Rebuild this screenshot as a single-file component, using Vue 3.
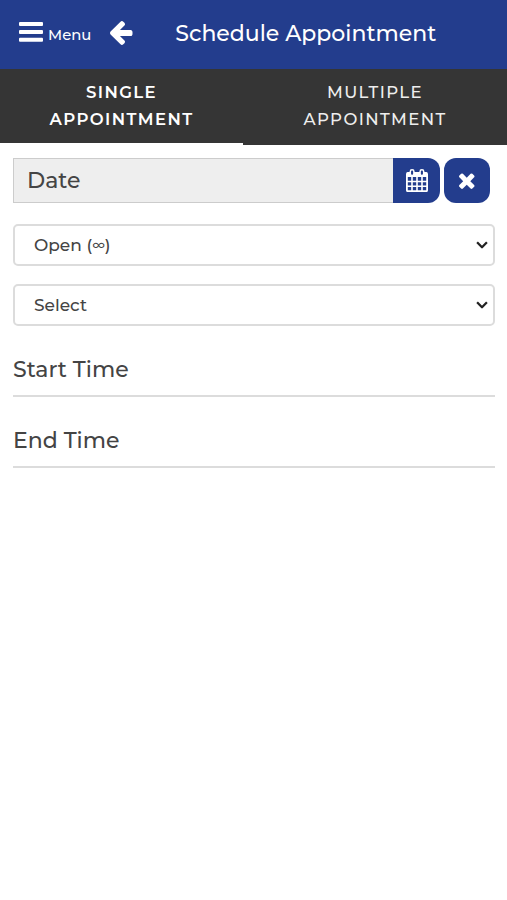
<script setup>
const selects = [
  { before: 'Open (', symbol: '∞', after: ')' },
  { before: 'Select', symbol: '', after: '' },
]
const times = [
  { label: 'Start Time', cls: 'start' },
  { label: 'End Time', cls: 'end' },
]
</script>

<template>
  <div class="page">
    <header class="bar">
      <button class="menu">
        <svg class="bars" viewBox="0 0 24 20">
          <rect x="0" y="0" width="24" height="4" rx="1" />
          <rect x="0" y="7.900" width="24" height="4" rx="1" />
          <rect x="0" y="15.800" width="24" height="4" rx="1" />
        </svg>
        <span class="menu-label">Menu</span>
      </button>
      <svg class="back" viewBox="192 179 1472 1560">
        <path d="M1664 896v128q0 53-32.5 90.500t-84.500 37.500h-704l293 294q38 36 38 90t-38 90l-75 76q-37 37-90 37-52 0-91-37l-651-652q-37-37-37-90 0-52 37-91l651-650q38-38 91-38 52 0 90 38l75 74q38 38 38 91t-38 91l-293 293h704q52 0 84.500 37.500t32.500 90.500z" />
      </svg>
      <h1 class="title">Schedule Appointment</h1>
    </header>
    <nav class="tabs">
      <a class="tab active"><span>SINGLE</span><span>APPOINTMENT</span></a>
      <a class="tab"><span>MULTIPLE</span><span>APPOINTMENT</span></a>
    </nav>
    <main class="form">
      <div class="date-row">
        <div class="date-field"><span>Date</span></div>
        <button class="btn pick">
          <svg class="calendar" viewBox="0 0 22 23">
            <rect x="0.900" y="4" width="20.200" height="18.200" rx="1" fill="none" stroke="#fff" stroke-width="1.800" />
            <path d="M1 3.500H21V8H1Z" fill="#fff" />
            <rect x="4.300" y="0.800" width="3.600" height="5.600" rx="1.700" fill="#233d8d" stroke="#fff" stroke-width="1.500" />
            <rect x="14.100" y="0.800" width="3.600" height="5.600" rx="1.700" fill="#233d8d" stroke="#fff" stroke-width="1.500" />
            <path d="M6 8V22M11 8V22M16 8V22M1 12.500H21M1 17.200H21" stroke="#fff" stroke-width="1.600" />
          </svg>
        </button>
        <button class="btn clear">
          <svg class="times" viewBox="302 334 1188 1220">
            <path d="M1490 1322q0 40-28 68l-136 136q-28 28-68 28t-68-28l-294-294-294 294q-28 28-68 28t-68-28l-136-136q-28-28-28-68t28-68l294-294-294-294q-28-28-28-68t28-68l136-136q28-28 68-28t68 28l294 294 294-294q28-28 68-28t68 28l136 136q28 28 28 68t-28 68l-294 294 294 294q28 28 28 68z" />
          </svg>
        </button>
      </div>
      <div v-for="s in selects" :key="s.before" class="select">
        <span>{{ s.before }}<span class="symbol">{{ s.symbol }}</span>{{ s.after }}</span>
        <svg class="chev" viewBox="0 0 12 8"><path d="M1.100 1.300L6 6.200L10.900 1.300" /></svg>
      </div>
      <div v-for="t in times" :key="t.label" class="time" :class="t.cls"><span>{{ t.label }}</span></div>
    </main>
  </div>
</template>

<style>
body { background: #fff; }
</style>

<style scoped>
.page {
  width: 507px;
  height: 900px;
  overflow: hidden;
  background: #fff;
  color: #444;
  font-family: Montserrat, Inter, "Liberation Sans", sans-serif;
  font-weight: 500;
}
.bar {
  display: flex;
  height: 69px;
  box-sizing: border-box;
  padding-left: 18.500px;
  background: #233d8d;
  color: #fff;
}
button {
  border: 0;
  padding: 0;
  font-family: inherit;
  color: #fff;
}
.menu { display: flex; width: 91.500px; background: none; align-items: flex-start; }
.bars { width: 24px; height: 20px; margin-top: 22px; fill: #fff; }
.menu-label {
  margin: 25px 0 0 5.500px;
  font-size: 14.800px;
  font-weight: 500;
  line-height: 20px;
}
.back { width: 22.500px; height: 24px; margin-top: 21px; fill: #fff; }
.title {
  margin: 19px 0 0 42.800px;
  font-size: 22px;
  font-weight: 500;
  line-height: 30px;
  white-space: nowrap;
}
.tabs { display: flex; height: 76px; background: #fff; }
.tab {
  display: flex;
  flex-direction: column;
  align-items: center;
  box-sizing: border-box;
  width: 264px;
  height: 76px;
  padding-top: 10px;
  background: #353535;
  color: #eee;
  font-size: 16.500px;
  font-weight: 500;
  line-height: 27px;
  letter-spacing: 1.400px;
}
.tab.active { width: 243px; height: 74px; font-weight: 600; color: #fff; }
.form { padding: 13px 12px 0 13px; }
.date-row { display: flex; height: 45px; margin-bottom: 21px; }
.date-field {
  box-sizing: border-box;
  width: 380px;
  height: 45px;
  padding-left: 13px;
  border: 1px solid #ccc;
  border-right: 0;
  background: #eee;
  font-size: 22px;
  line-height: 43px;
}
.btn {
  display: flex;
  align-items: center;
  justify-content: center;
  height: 45px;
  background: #233d8d;
}
.pick { width: 47px; border-radius: 0 12px 12px 0; }
.clear { width: 46px; margin-left: 4px; border-radius: 12px; }
.calendar { width: 22px; height: 23px; margin-left: 1px; }
.times { width: 15.500px; height: 16px; fill: #fff; }
.select {
  display: flex;
  justify-content: space-between;
  align-items: center;
  box-sizing: border-box;
  height: 42px;
  margin-bottom: 18px;
  padding: 0 5px 0 19px;
  border: 2px solid #dcdcdc;
  border-radius: 5px;
  font-size: 17px;
}
.symbol { font-size: 13.500px; vertical-align: 1px; line-height: 1; }
.chev { width: 12px; height: 8px; }
.chev path { fill: none; stroke: #222; stroke-width: 2.300; stroke-linejoin: round; }
.time {
  box-sizing: border-box;
  height: 71px;
  border-bottom: 2px solid #dcdcdc;
  font-size: 22px;
  line-height: 30px;
}
.start { padding-top: 29px; margin-top: -18px; }
.end { padding-top: 29px; }
</style>
